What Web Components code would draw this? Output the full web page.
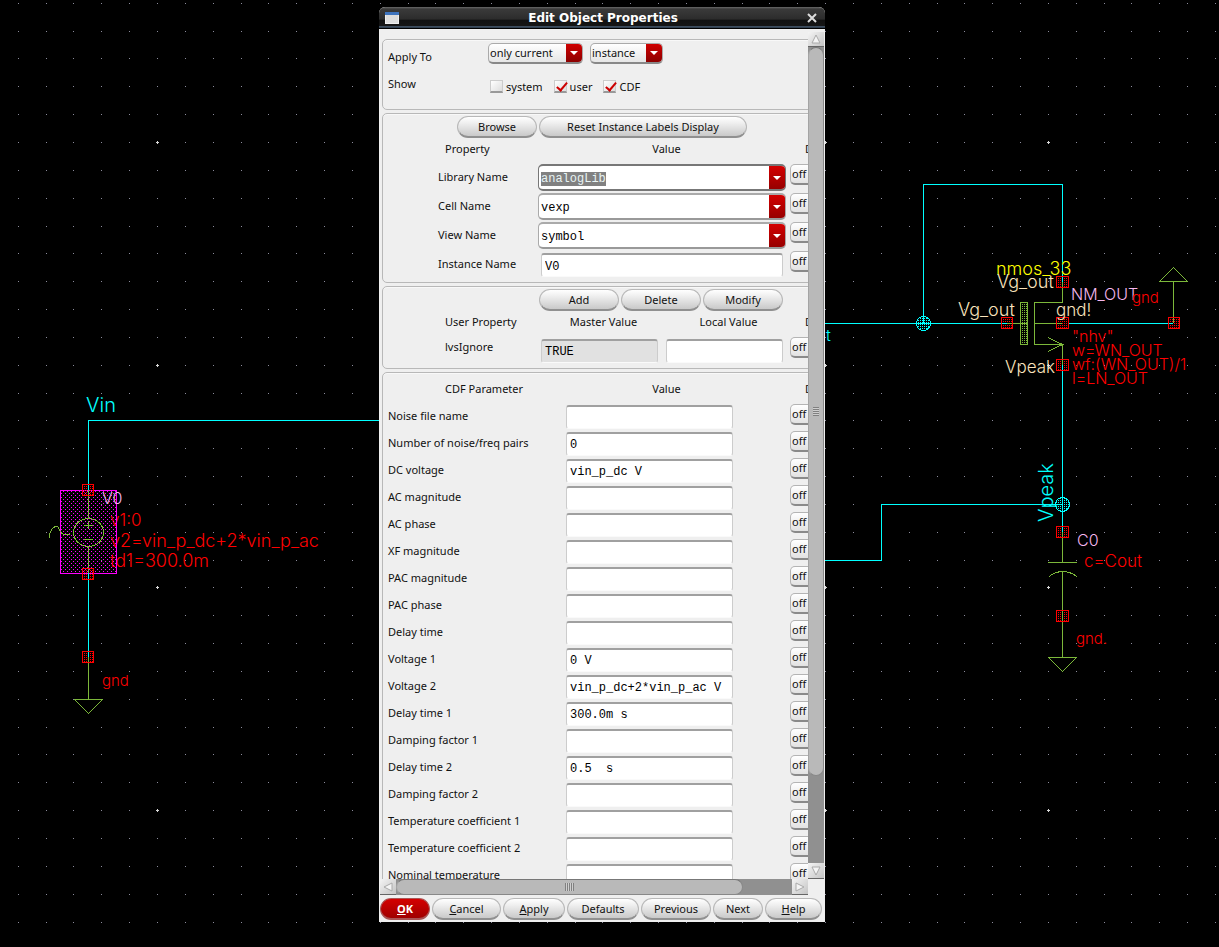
<!DOCTYPE html>
<html lang="en">
<head>
<meta charset="utf-8">
<title>Edit Object Properties</title>
<style>
html, body { height: 100%; margin: 0; background: #000; }
body { font: 11px/16px "Noto Sans", "Open Sans", sans-serif; color: #111; overflow: hidden; }
</style>
</head>
<body>
<design-desktop>
  <schematic-canvas slot="canvas"></schematic-canvas>
  <tool-window heading="Edit Object Properties">
    <scroll-pane>
      <group-box class="scope">
        <scope-options></scope-options>
      </group-box>
      <group-box>
        <button-bar class="inset">
          <push-button wide="80">Browse</push-button>
          <push-button wide="208">Reset Instance Labels Display</push-button>
        </button-bar>
        <column-heads first="Property" second="Value"></column-heads>
        <combo-row label="Library Name" value="analogLib" active></combo-row>
        <combo-row label="Cell Name" value="vexp"></combo-row>
        <combo-row label="View Name" value="symbol"></combo-row>
        <combo-row label="Instance Name" value="V0" plain></combo-row>
      </group-box>
      <group-box class="user">
        <button-bar class="user">
          <push-button wide="80">Add</push-button>
          <push-button wide="80">Delete</push-button>
          <push-button wide="80">Modify</push-button>
        </button-bar>
        <column-heads first="User Property" second="Master Value" third="Local Value"></column-heads>
        <user-row label="lvsIgnore" value="TRUE"></user-row>
      </group-box>
      <group-box class="last">
        <column-heads first="CDF Parameter" second="Value" class="cdf"></column-heads>
        <param-row label="Noise file name"></param-row>
        <param-row label="Number of noise/freq pairs" value="0"></param-row>
        <param-row label="DC voltage" value="vin_p_dc V"></param-row>
        <param-row label="AC magnitude"></param-row>
        <param-row label="AC phase"></param-row>
        <param-row label="XF magnitude"></param-row>
        <param-row label="PAC magnitude"></param-row>
        <param-row label="PAC phase"></param-row>
        <param-row label="Delay time"></param-row>
        <param-row label="Voltage 1" value="0 V"></param-row>
        <param-row label="Voltage 2" value="vin_p_dc+2*vin_p_ac V"></param-row>
        <param-row label="Delay time 1" value="300.0m s"></param-row>
        <param-row label="Damping factor 1"></param-row>
        <param-row label="Delay time 2" value="0.5  s"></param-row>
        <param-row label="Damping factor 2"></param-row>
        <param-row label="Temperature coefficient 1"></param-row>
        <param-row label="Temperature coefficient 2"></param-row>
        <param-row label="Nominal temperature"></param-row>
      </group-box>
    </scroll-pane>
    <button-bar slot="actions" class="actions">
      <push-button wide="50" primary><u>O</u>K</push-button>
      <push-button wide="69"><u>C</u>ancel</push-button>
      <push-button wide="62"><u>A</u>pply</push-button>
      <push-button wide="72">Defaults</push-button>
      <push-button wide="70">Previous</push-button>
      <push-button wide="50">Next</push-button>
      <push-button wide="57"><u>H</u>elp</push-button>
    </button-bar>
  </tool-window>
</design-desktop>

<script>
const FIELD_CSS = `
  * { box-sizing: border-box; }
  input, select { font: inherit; color: inherit; margin: 0; outline: none; }
  input[type=text] {
    font: 12px/16px "Liberation Mono", monospace; color: #000; background: #fff;
    height: 24px; padding: 1px 3px 0; border: 1px solid #ccc; border-top: 2px solid #a0a0a0;
    border-bottom-color: #fafafa; border-radius: 3px; min-width: 0;
  }
  input[readonly] { background: #e1e1e1; }
  .flag {
    appearance: none; width: 52px; height: 21px; padding: 0 1px; line-height: 16px;
    border: 1px solid #b4b4b4; border-bottom: 2px solid #8a8a8a; border-radius: 5px;
    background: linear-gradient(#fff, #e2e2e2);
  }
`;
const FLAG = name => `<select class="flag" aria-label="${name} display"><option>off</option><option>name</option><option>value</option><option>both</option></select>`;

class Base extends HTMLElement {
  connectedCallback() {
    if (this.shadowRoot) return;
    this.attachShadow({ mode: 'open' }).innerHTML = this.view();
    if (this.ready) this.ready();
  }
  attr(name) { return this.getAttribute(name) || ''; }
}

customElements.define('design-desktop', class extends Base {
  view() { return `<style>
    :host { display: grid; box-sizing: border-box; height: 100vh; position: relative; overflow: hidden;
      padding: 7px 394px 25px 379px; grid-template: minmax(0, 1fr) / minmax(446px, 1fr); }
    ::slotted([slot=canvas]) { position: absolute; inset: 0; }
    ::slotted(tool-window) { position: relative; }
  </style><slot name="canvas"></slot><slot></slot>`; }
});

customElements.define('schematic-canvas', class extends Base {
  view() {
    let dots = '', marks = '';
    for (let i = -6; i < 60; i++) for (let j = -6; j < 40; j++) {
      const x = Math.round(157 + i * 27.84), y = Math.round(142 + j * 27.84);
      if (i % 8 === 0 && j % 8 === 0) marks += `M${x - 1} ${y}h3v1h-3zM${x} ${y - 1}h1v3h-1z`;
      else dots += `M${x} ${y}h1v1h-1z`;
    }
    // One-pixel stipple of a box; keep() limits it to a shape.
    const stipple = (x0, y0, w, h, keep = () => true) => {
      let d = '';
      for (let y = y0; y < y0 + h; y++) for (let x = x0; x < x0 + w; x++) if (keep(x, y)) d += `M${x} ${y}h1v1h-1z`;
      return d;
    };
    const mesh = (x, y) => x % 2 === 0 && y % 2 === 0;
    const pinAt = [[82,484],[82,568],[82,651],[1056,276],[1056,317],[1056,359],[1001,317],[1168,317],[1056,526],[1056,610]];
    const pinBoxes = pinAt.map(([x, y]) => `M${x + .5} ${y + .5}h${x === 1056 ? 12 : 11}v11h-${x === 1056 ? 12 : 11}z`).join('');
    const pinFill = pinAt.map(([x, y]) => stipple(x + 2, y + 2, 9, 9, (a, b) => (a - x) % 2 === 0 && (b - y) % 2 === 0)).join('');
    const joints = [[923, 323], [1062, 504]];
    const jointFill = joints.map(([x, y]) => stipple(x - 7, y - 7, 15, 15, (a, b) => mesh(a, b) && (a - x) ** 2 + (b - y) ** 2 < 46)).join('');
    const selected = stipple(61, 491, 55, 82, (x, y) => (x % 4 === 1 && y % 4 === 1) || (x % 4 === 3 && y % 4 === 3));
    return `<style>
      :host { display: block; }
      svg { display: block; width: 100%; height: 100%; }
      text { font-family: Inter, sans-serif; font-weight: 300; font-size: 17px; }
      .s { font-size: 15px; } .l { font-size: 20px; } .m { font-size: 16px; } .x { font-size: 18px; }
      .w { stroke: #0ff; fill: none; } .g { stroke: #7cb83a; fill: none; }
      .r { fill: #f00; } .c { fill: #0ff; } .p { fill: #f6b8f0; } .b { fill: #fae3bc; } .y { fill: #ff0; }
    </style>
    <svg aria-label="Schematic">
      <g shape-rendering="crispEdges">
        <path d="${dots}" fill="#8c8c9c"/><path d="${marks}" fill="#d8d8d8"/>
      </g>
      <text class="r" x="110" y="526">v1:0</text>
      <text class="r x" x="110" y="547">v2=vin_p_dc+2*vin_p_ac</text>
      <text class="r x" x="110" y="567">td1=300.0m</text>
      <g shape-rendering="crispEdges">
        <path d="M61 491H87V573H61z" fill="#000"/>
        <path d="${selected}" fill="#f0f"/><path d="M60.5 490.5H116.5V573.5H60.5z" fill="none" stroke="#f0f"/>
        <path d="${pinFill}" fill="#f00"/><path d="${jointFill}" fill="#0ff"/>
        <path class="w" d="M88.5 490V420.5H400M88.5 573V657M923.5 323V184.5H1062.5V282M800 323.5H1007M1068 323.5H1173M1062.5 365V532M800 560.5H881.5V504.5H1062"/>
        <path class="g" d="M88.5 490V518M88.5 546V573M88.5 521V529M84 525.5H93M84 539.5H93M88.5 657V699M74 699.5H103M1007 323.5H1027M1062.5 282V302.5H1034.5V344.5H1062.5V365M1034 323.5H1062M1173.5 323V281M1159 281.5H1188M1062.5 532V562M1048 562.5H1077M1062.5 571V657M1048 657.5H1077"/>
        <path d="${stipple(1021, 303, 6, 41, mesh)}" fill="#7cb83a"/>
        <path class="g" d="M1020.5 302.5H1027.5V344.5H1020.5z"/>
        <path class="g" d="M74.5 699.5L88.5 713.5L102.5 699.5M1159.5 281.5L1173.5 267.5L1187.5 281.5M1048.5 657.5L1062.5 671.5L1076.5 657.5M1048 337.5L1062.5 344.5L1048 351.5M1049 576.5Q1062.5 566.5 1077 576.5"/>
        <ellipse class="g" cx="88.5" cy="532.5" rx="15" ry="14"/>
        <path class="g" d="M49.5 538V535C50 530 54 526 57.5 526.5C59.5 528 60 534 64 534.5H70"/>
        <path d="${pinBoxes}" fill="none" stroke="#f00"/>
        <g fill="none" stroke="#0ff"><circle cx="923.5" cy="323.5" r="7"/><circle cx="1062.5" cy="504.5" r="7"/></g>
      </g>
      <text class="c l" x="86" y="412">Vin</text>
      <text class="p m" x="102" y="504">V0</text>
      <text class="r s" x="102" y="686">gnd</text>
      <text class="y x" x="996" y="275">nmos_33</text>
      <text class="b x" x="997" y="288">Vg_out</text>
      <text class="b x" x="958" y="316">Vg_out</text>
      <text class="b" x="1056" y="316">gnd!</text>
      <text class="p m" x="1071" y="300">NM_OUT</text>
      <text class="r s" x="1132" y="303">gnd</text>
      <text class="b" x="1005" y="373">Vpeak</text>
      <text class="r m" x="1072" y="342">"nhv"</text>
      <text class="r m" x="1072" y="356">w=WN_OUT</text>
      <text class="r m" x="1072" y="370">wf:(WN_OUT)/1</text>
      <text class="r m" x="1072" y="384">l=LN_OUT</text>
      <text class="c m" x="826" y="341">t</text>
      <text class="c l" transform="translate(1053 522) rotate(-90)">Vpeak</text>
      <text class="p m" x="1077" y="546">C0</text>
      <text class="r" x="1084" y="567">c=Cout</text>
      <text class="r s" x="1076" y="644">gnd.</text>
    </svg>`;
  }
});

customElements.define('tool-window', class extends Base {
  view() { return `<style>
    :host { display: flex; flex-direction: column; min-height: 0; background: #efefef; border-radius: 6px 6px 0 0; overflow: hidden; }
    header { display: flex; align-items: center; height: 22px; box-sizing: border-box; padding: 0 8px 0 6px; color: #fff;
      background: linear-gradient(#6a6a6a 0, #3a3a3a 2px, #2c2c2c 55%, #111 60%, #151515 85%, #56708c 91%, #000 96%); }
    h1 { flex: 1; margin: 0; text-align: center; font: bold 12px/20px "DejaVu Sans", "Open Sans", sans-serif; }
    button { width: 10px; height: 10px; padding: 0; border: 0; background: none; display: block; }
    svg { display: block; }
    main { flex: 1; min-height: 0; display: flex; padding: 3px 1px 0 1px; }
    ::slotted(scroll-pane) { flex: 1; }
    footer { height: 27px; padding: 3px 2px 0 1px; box-sizing: border-box; }
  </style>
  <header><svg width="14" height="12"><path d="M0 0h14v12H0z" fill="#eee"/><path d="M0 0h14v3H0z" fill="#3d73bd"/><path d="M1 3h12v8H1z" fill="#ddd"/></svg>
    <h1>${this.attr('heading')}</h1>
    <button aria-label="Close"><svg width="10" height="10"><path d="M1 1l8 8M9 1l-8 8" stroke="#ddd" stroke-width="2"/></svg></button></header>
  <main><slot></slot></main><footer><slot name="actions"></slot></footer>`; }
});

customElements.define('scroll-pane', class extends Base {
  view() { return `<style>
    :host { display: grid; min-width: 0; grid-template: minmax(0, 1fr) 16px / minmax(0, 1fr) 16px; }
    .view { overflow: hidden; padding: 7px 0 0 2px; position: relative; }
    .bar { display: flex; background: #909090; }
    .v { flex-direction: column; }
    button { flex: none; width: 16px; height: 16px; padding: 0; border: 0; border-bottom: 1px solid #666; background: linear-gradient(135deg, #f4f4f4, #c4c4c4); }
    .v button:first-of-type { height: 15px; }
    svg { display: block; margin: auto; }
    .thumb { box-sizing: border-box; background: #b9b9b9; border: 1px solid #8a8a8a; border-color: #777 #888 #888 #a4a4a4; border-radius: 8px; display: grid; place-items: center; }
    .v .thumb { flex: 729; } .v .gap { flex: 87; }
    .h .thumb { flex: 347; } .h .gap { flex: 49; }
    .grip { width: 9px; height: 8px; background: repeating-linear-gradient(90deg, #808080 0 1px, #cfcfcf 1px 2px); }
    .v .grip { width: 6px; height: 9px; background: repeating-linear-gradient(#808080 0 1px, #cfcfcf 1px 2px); }
  </style>
  <div class="view"><slot></slot></div>
  <div class="bar v"><button aria-label="Scroll up"><svg width="10" height="10"><path d="M1 9L5 1L9 9z" fill="#f4f4f4" stroke="#aaa"/></svg></button>
    <div class="thumb"><div class="grip"></div></div><div class="gap"></div>
    <button aria-label="Scroll down"><svg width="10" height="10"><path d="M1 1L5 9L9 1z" fill="#f4f4f4" stroke="#aaa"/></svg></button></div>
  <div class="bar h"><button aria-label="Scroll left"><svg width="10" height="10"><path d="M9 1L1 5L9 9z" fill="#f4f4f4" stroke="#aaa"/></svg></button>
    <div class="thumb"><div class="grip"></div></div><div class="gap"></div>
    <button aria-label="Scroll right"><svg width="10" height="10"><path d="M1 1L9 5L1 9z" fill="#f4f4f4" stroke="#aaa"/></svg></button></div>`; }
  ready() {
    const view = this.shadowRoot.querySelector('.view');
    const step = { 'Scroll up': [0, -27], 'Scroll down': [0, 27], 'Scroll left': [-20, 0], 'Scroll right': [20, 0] };
    this.shadowRoot.querySelectorAll('button').forEach(b =>
      b.addEventListener('click', () => view.scrollBy(...step[b.getAttribute('aria-label')])));
  }
});

customElements.define('group-box', class extends Base {
  view() { return `<style>
    :host { display: block; box-sizing: border-box; min-width: 500px; margin-bottom: 3px; padding: 2px 5px 8px;
      border: 1px solid #b8b8b8; border-radius: 5px; box-shadow: inset 0 1px #f8f8f8; }
    :host(.scope) { height: 71px; padding: 3px 5px 0; }
    :host(.user) { padding-bottom: 6px; }
    :host(.last) { padding-top: 8px; }
  </style><slot></slot>`; }
});

customElements.define('scope-options', class extends Base {
  view() {
    const box = (id, on) => `<span class="check"><input type="checkbox" id="${id}"${on ? ' checked' : ''}><label for="${id}">${id}</label></span>`;
    return `<style>${FIELD_CSS}
    :host { display: block; }
    .row { display: flex; align-items: center; height: 21px; }
    .row > label, .row > span.name { width: 100px; padding-top: 7px; }
    .drop { position: relative; display: block; margin-right: 7px; }
    .drop select { appearance: none; width: 100%; height: 21px; padding: 0 1px 1px; border: 1px solid #aaa; border-bottom: 2px solid #888; border-radius: 5px;
      background: linear-gradient(#fff, #e6e6e6); }
    .drop::before { content: ""; position: absolute; right: 1px; top: 1px; width: 16px; height: 18px; background: linear-gradient(#d00000, #8c0000); border-radius: 0 4px 4px 0; pointer-events: none; }
    .drop::after { content: ""; position: absolute; right: 5px; top: 8px; border: 4px solid transparent; border-top-color: #fff; border-bottom: 0; pointer-events: none; }
    .row + .row { margin-top: 10px; height: 22px; }
    .row + .row > span.name { padding: 0 0 3px; width: 102px; }
    .check { display: flex; align-items: center; padding-top: 3px; margin-right: 11px; gap: 3px; }
    input[type=checkbox] { appearance: none; width: 13px; height: 13px; border: 1px solid #ccc; border-bottom: 2px solid #999; background: linear-gradient(135deg, #fff, #ddd); position: relative; }
    input:checked::after { content: ""; position: absolute; left: 4px; top: -1px; width: 4px; height: 9px; border: solid #c00; border-width: 0 2px 2px 0; transform: rotate(40deg); }
  </style>
  <div class="row"><label for="scope">Apply To</label>
    <span class="drop" style="width:95px"><select id="scope"><option>only current</option><option>all selected</option></select></span>
    <span class="drop" style="width:73px"><select aria-label="Object kind"><option>instance</option><option>wire</option></select></span></div>
  <div class="row"><span class="name">Show</span>${box('system')}${box('user', 1)}${box('CDF', 1)}</div>`; }
});

customElements.define('button-bar', class extends Base {
  view() { return `<style>
    :host { display: flex; gap: 2px; }
    :host(.inset) { padding-left: 69px; }
    :host(.user) { padding-left: 151px; }
    :host(.actions) { justify-content: space-between; padding-right: 1px; }
  </style><slot></slot>`; }
});

customElements.define('push-button', class extends Base {
  view() { return `<style>
    :host { display: block; flex: 0 1 ${this.attr('wide')}px; }
    button { width: 100%; height: 22px; padding: 0; font: inherit; color: #111; text-align: center; white-space: nowrap;
      border: 1px solid #b8b8b8; border-bottom: 2px solid #909090; border-radius: 11px; background: linear-gradient(#fff, #f0f0f0 30%, #c9c9c9); }
    :host([primary]) button { font-weight: bold; color: #fff; background: linear-gradient(#d40000, #a00000); border-color: #a55; }
  </style><button type="button"><slot></slot></button>`; }
});

customElements.define('column-heads', class extends Base {
  view() {
    const third = this.attr('third');
    return `<style>
    :host { display: grid; height: 24px; padding-top: 3px; box-sizing: border-box; padding-left: 57px; text-align: center;
      grid-template-columns: ${third ? '100px 117px 8px 117px 18px' : '96px 251px 13px'} auto; }
    :host(.cdf) { height: 23px; padding-top: 0; }
    span { white-space: nowrap; }
    .edge { text-align: left; }
  </style><span class="edge">${this.attr('first')}</span><span>${this.attr('second')}</span>${third ? `<i></i><span>${third}</span>` : ''}<i></i><span class="edge">Display</span>`; }
});

customElements.define('combo-row', class extends Base {
  view() {
    const plain = this.hasAttribute('plain'), name = this.attr('label');
    return `<style>${FIELD_CSS}
    :host { display: grid; grid-template-columns: 100px 248px auto; height: 29px; padding: 2px 0 0 50px; box-sizing: border-box; }
    :host([plain]) { margin-bottom: -4px; }
    label { padding-top: 5px; white-space: nowrap; }
    .combo { display: flex; width: 248px; height: 27px; border: 1px solid #aaa; border-top: 2px solid #aaa; border-bottom: 2px solid #999; border-radius: 5px; background: #fff; overflow: hidden; }
    .combo input[type=text] { flex: 1; height: 23px; border: 0; padding: 3px 2px 0; background: none; }
    :host([active]) .combo { border-color: #777; }
    .combo button { width: 16px; padding: 0; border: 0; background: linear-gradient(#d40000, #960000); display: grid; place-items: center; }
    .combo button::after { content: ""; border: 4px solid transparent; border-top-color: #fff; border-bottom: 0; }
    input::selection { background: rgba(128,128,128,.99); color: #e8f4f4; }
    .plain[type=text] { width: 242px; margin: 2px 3px 0; padding-top: 2px; }
    .flag { margin-left: 4px; }
  </style><label for="f">${name}</label>
  ${plain ? `<input type="text" class="plain" id="f" value="${this.attr('value')}">`
    : `<span class="combo"><input type="text" id="f" value="${this.attr('value')}"><button type="button" aria-label="Choose ${name}"></button></span>`}
  ${FLAG(name)}`; }
  ready() {
    if (this.hasAttribute('active')) { const f = this.shadowRoot.getElementById('f'); f.focus({ preventScroll: true }); f.select(); }
  }
});

customElements.define('user-row', class extends Base {
  view() { return `<style>${FIELD_CSS}
    :host { display: grid; grid-template-columns: 88px 117px 117px auto; column-gap: 8px; height: 27px; padding: 2px 0 0 57px; box-sizing: border-box; }
    label { padding-top: 2px; } .flag { margin-left: -1px; }
    input[type=text] { margin-top: 2px; }
  </style><label for="f">${this.attr('label')}</label><input type="text" id="f" readonly value="${this.attr('value')}">
  <input type="text" aria-label="Local value">${FLAG(this.attr('label'))}`; }
});

customElements.define('param-row', class extends Base {
  view() { return `<style>${FIELD_CSS}
    :host { display: grid; grid-template-columns: 178px 167px auto; height: 27px; }
    label { padding-top: 4px; white-space: nowrap; }
    input[type=text] { margin-top: 1px; }
    .flag { margin-left: 57px; }
  </style><label for="f">${this.attr('label')}</label><input type="text" id="f" value="${this.attr('value')}">${FLAG(this.attr('label'))}`; }
});
</script>
</body>
</html>
